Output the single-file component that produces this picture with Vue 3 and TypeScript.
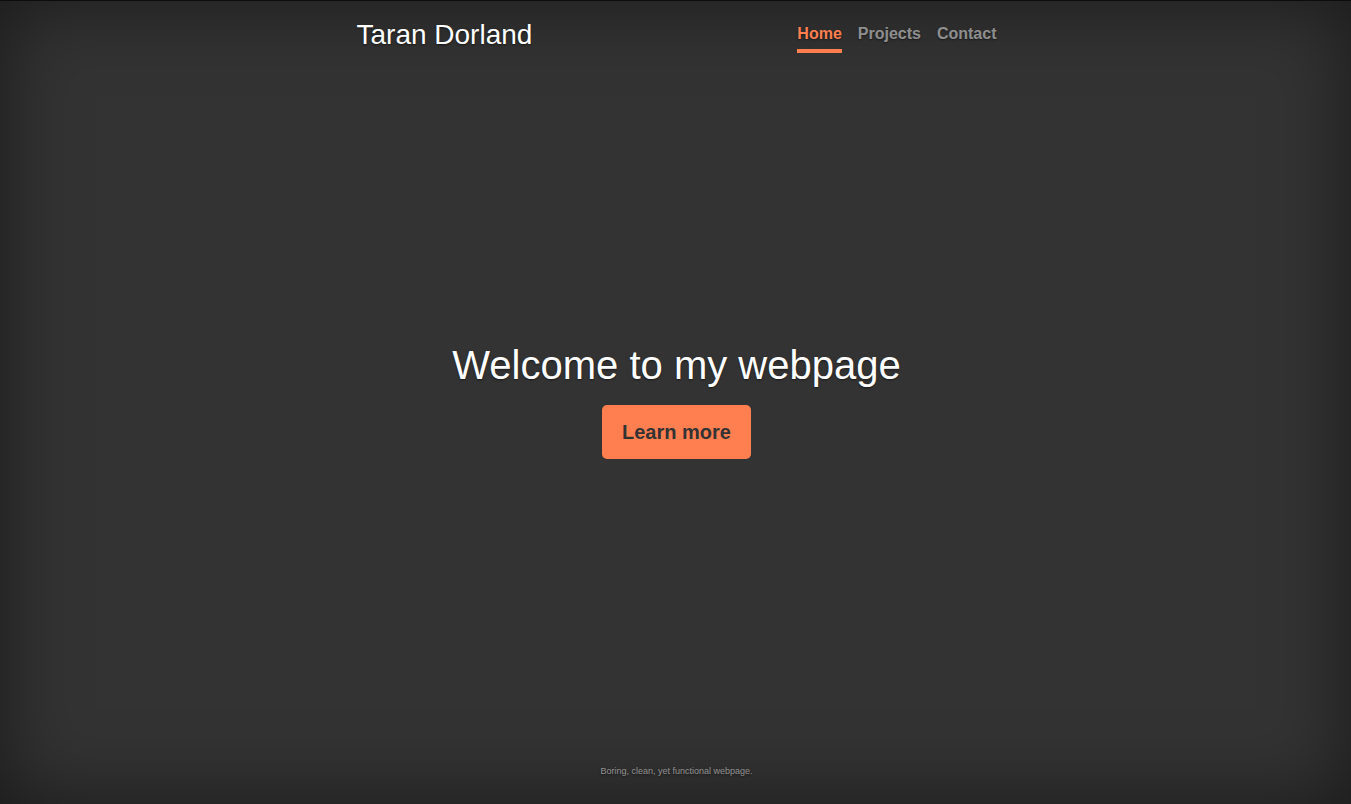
<script setup lang="ts">
interface NavItem {
  label: string
  href: string
  active: boolean
}

const navItems: NavItem[] = [
  { label: 'Home', href: '#home', active: true },
  { label: 'Projects', href: '#projects', active: false },
  { label: 'Contact', href: '#contact', active: false },
]
</script>

<template>
  <div class="page">
    <div class="cover">
      <header class="masthead">
        <h3 class="brand">Taran Dorland</h3>
        <nav class="nav" aria-label="Main">
          <a
            v-for="item in navItems"
            :key="item.label"
            :href="item.href"
            class="nav-link"
            :class="{ active: item.active }"
            :aria-current="item.active ? 'page' : undefined"
          >{{ item.label }}</a>
        </nav>
      </header>
      <main class="hero">
        <h1 class="title">Welcome to my webpage</h1>
        <a href="#projects" class="cta">Learn more</a>
      </main>
      <footer class="footer">
        <p class="tagline">Boring, clean, yet functional webpage.</p>
      </footer>
    </div>
  </div>
</template>

<style>
html,
body,
#app {
  height: 100%;
}

body {
  margin: 0;
  background: #333;
}
</style>

<style scoped>
.page {
  box-sizing: border-box;
  min-height: 100%;
  display: flex;
  justify-content: center;
  padding-left: 2px;
  border-top: 1px solid #0c0c0c;
  background: #333;
  box-shadow: inset 0 0 80px rgba(0, 0, 0, 0.5);
  color: #fff;
  font-family: "Liberation Sans", Arial, sans-serif;
  font-size: 16px;
  line-height: 24px;
  text-shadow: 0 1px 2px rgba(0, 0, 0, 0.5);
}

.cover {
  box-sizing: border-box;
  width: 100%;
  max-width: 672px;
  padding: 16px;
  display: flex;
  flex-direction: column;
}

.masthead {
  display: flex;
  justify-content: space-between;
  align-items: flex-start;
}

.brand {
  margin: 0;
  font-size: 28px;
  font-weight: 400;
  line-height: 36px;
}

.nav {
  display: flex;
  gap: 16px;
}

.nav-link {
  padding: 5px 0 3px;
  border-bottom: 4px solid transparent;
  color: rgba(255, 255, 255, 0.5);
  font-weight: 700;
  text-decoration: none;
}

.nav-link.active {
  border-bottom-color: coral;
  color: coral;
}

.hero {
  margin: auto 0;
  padding: 0 24px;
  text-align: center;
}

.title {
  margin: 0 0 16px;
  font-size: 40px;
  font-weight: 400;
  line-height: 48px;
}

.cta {
  display: inline-block;
  padding: 12px 20px;
  border-radius: 5px;
  background: coral;
  color: #333;
  font-size: 20px;
  font-weight: 700;
  line-height: 30px;
  text-decoration: none;
  text-shadow: none;
}

.footer {
  color: rgba(255, 255, 255, 0.5);
  text-align: center;
}

.tagline {
  margin: 16px 0 8px;
  font-size: 9px;
  line-height: 18px;
}
</style>
